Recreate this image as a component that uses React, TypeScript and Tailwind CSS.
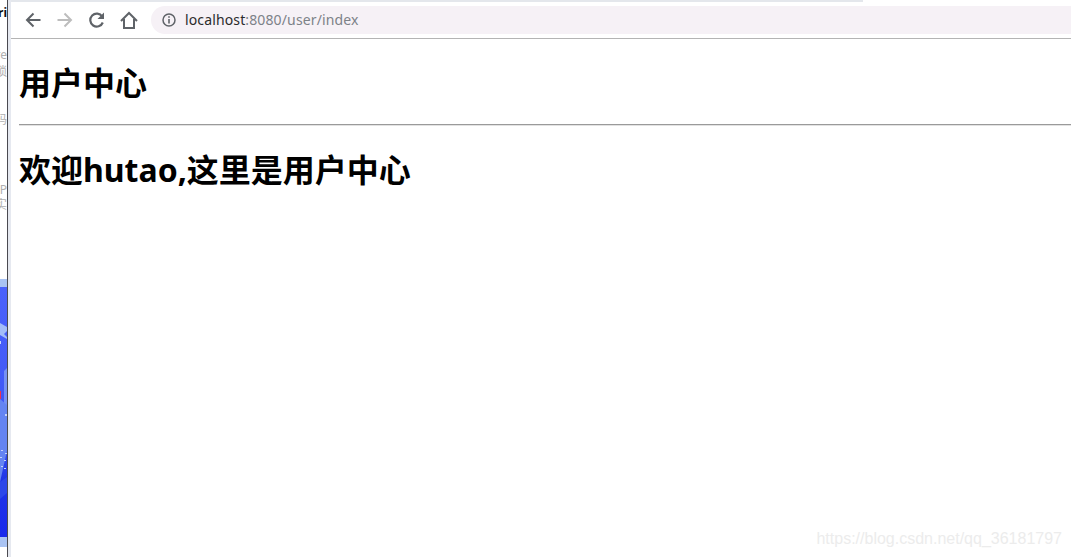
import React from 'react';

const cjk = 'font-["Noto_Sans","Noto_Sans_CJK_SC",sans-serif]';

const SideText: React.FC<{ text: string; className: string }> = ({ text, className }) => (
  <div className={`w-[7px] overflow-hidden flex justify-end whitespace-nowrap leading-[14px] text-[12px] ${className}`}>
    <span>{text}</span>
  </div>
);

// sliver of the banner picture in the window behind the browser
const BannerSliver: React.FC = () => (
  <svg width="7" height="268" viewBox="0 0 7 268" className="block">
    <defs>
      <linearGradient id="bannerBg" x1="0" y1="0" x2="0" y2="1">
        <stop offset="0" stopColor="#4b62fb" />
        <stop offset="0.6" stopColor="#3d55f5" />
        <stop offset="0.75" stopColor="#1f35e6" />
        <stop offset="1" stopColor="#1726ee" />
      </linearGradient>
    </defs>
    <rect width="7" height="268" fill="url(#bannerBg)" />
    <rect width="7" height="8" fill="#a9c3f3" />
    <path d="M0 44 7 48V52L4 55 7 58V60L0 56Z" fill="#a3bcf8" />
    <rect x="0" y="62" width="1" height="3" fill="#c9d8fb" />
    <rect x="0" y="112" width="1" height="8" fill="#ef3350" />
    <path d="M4 92 7 89V140H4Z" fill="#7590f3" />
    <path d="M0 120 7 126V172L0 203Z" fill="#6484f2" />
    <path d="M0 203 7 198V214L0 220Z" fill="#2c47ea" />
    <g fill="#c4d3fb">
      <rect x="1" y="171" width="2" height="1" />
      <rect x="5" y="174" width="2" height="1" />
      <rect x="0" y="178" width="2" height="1" />
      <rect x="4" y="181" width="2" height="1" />
      <rect x="1" y="187" width="2" height="1" />
      <rect x="4" y="189" width="2" height="1" />
      <rect x="5" y="135" width="2" height="2" />
    </g>
    <rect y="258" width="7" height="10" fill="#a9c3f3" />
  </svg>
);

const Toolbar: React.FC = () => (
  <div className="h-[36px] flex items-center pl-[13px]">
    <svg width="18" height="18" viewBox="0 0 18 18" fill="none" stroke="#5f6368" strokeWidth="2" className="mr-[14px]">
      <path d="M16.500 9H3M9.500 2.500 3 9l6.500 6.500" />
    </svg>
    <svg width="18" height="18" viewBox="0 0 18 18" fill="none" stroke="#bdbdbd" strokeWidth="2" className="mr-[14px]">
      <path d="M1.500 9H15M8.500 2.500 15 9l-6.500 6.500" />
    </svg>
    <svg width="18" height="18" viewBox="0 0 18 18" fill="none" stroke="#5f6368" strokeWidth="2.200" className="mr-[14px]">
      <path d="M14.800 11.500a6.500 6.500 0 1 1-.6-6" />
      <path d="M16 1.500v6.500h-6.500" fill="#5f6368" stroke="none" />
    </svg>
    <svg width="18" height="18" viewBox="0 0 18 18" fill="none" stroke="#5f6368" strokeWidth="2" className="mr-[13px]">
      <path d="M1 10 9 2l8 8M4 8v9h10V8" />
    </svg>
    <div className="flex-1 h-[28px] bg-[#f6f1f6] rounded-l-[14px] flex items-center pl-[11px]">
      <svg width="14" height="14" viewBox="0 0 14 14" fill="none" stroke="#5f6368" className="mr-[9px]">
        <circle cx="7" cy="7" r="6" strokeWidth="1.500" />
        <path d="M7 6v4.500M7 3.200v1.500" strokeWidth="1.600" />
      </svg>
      <span className='font-["Noto_Sans",sans-serif] text-[14px] tracking-[0.13px] text-[#7d8288] leading-none'>
        <span className="text-[#2b2b2b]">localhost</span>:8080/user/index
      </span>
    </div>
  </div>
);

const App: React.FC = () => {
  return (
    <div className="w-[1071px] h-[557px] flex overflow-hidden bg-white">
      {/* window behind the browser */}
      <div className={`w-[7px] h-full flex flex-col bg-white ${cjk}`}>
        <SideText text="ri" className="mt-[6px] text-[#111111] font-bold" />
        <SideText text="re" className="mt-[28px] text-[#b0b0b0]" />
        <SideText text="琐" className="mt-[3px] text-[#b0b0b0]" />
        <SideText text="码" className="mt-[34px] text-[#b0b0b0]" />
        <SideText text="P" className="mt-[56px] text-[#b0b0b0]" />
        <SideText text="实" className="mt-[1px] text-[#b0b0b0]" />
        <div className="mt-auto mb-[10px]">
          <BannerSliver />
        </div>
      </div>
      <div className="w-px h-full bg-[#4a4a50]" />
      <div className="w-[3px] h-full bg-[#e6e9f0]" />

      <div className="flex-1 min-w-0 flex flex-col">
        <div className="h-[2px] w-[852px] bg-[#e4e7ec]" />
        <Toolbar />
        <div className="h-px bg-[#b4b4b4]" />
        <div className={`pl-[8px] text-black ${cjk}`}>
          <h1 className="text-[32px] font-bold leading-[44px] mt-[22px]">用户中心</h1>
          <div className="h-[2px] bg-[#9a9a9a] border-b border-[#e2e2e2] mt-[19px]" />
          <h1 className="text-[32px] font-bold leading-[44px] mt-[22px]">欢迎hutao,这里是用户中心</h1>
        </div>
        <div className='mt-auto mb-[8px] pr-[9px] text-right font-["Liberation_Sans",sans-serif] text-[16px] leading-[20px] text-[#ececec]'>
          https://blog.csdn.net/qq_36181797
        </div>
      </div>
    </div>
  );
};

export default App;
